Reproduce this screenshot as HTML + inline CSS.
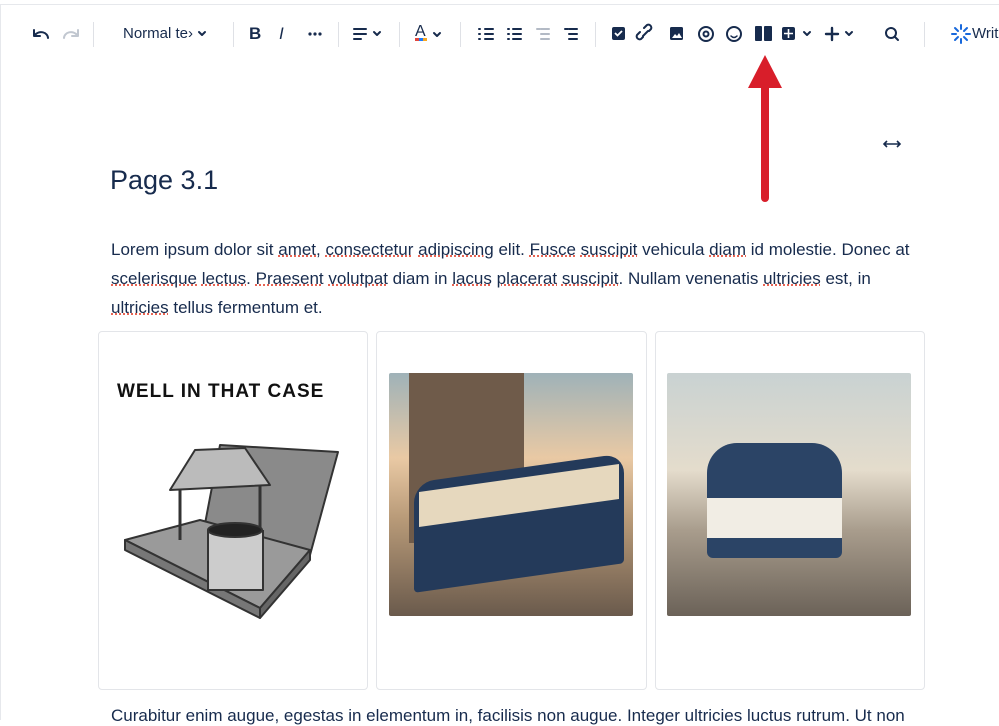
<!DOCTYPE html>
<html><head><meta charset="utf-8"><style>
*{margin:0;padding:0;box-sizing:border-box}
body{width:999px;height:720px;overflow:hidden;background:#fff;font-family:"Liberation Sans",sans-serif;color:#172B4D;position:relative}
.topline{position:absolute;left:0;top:4px;width:999px;height:1px;background:#e6e8ec}
.leftline{position:absolute;left:0;top:4px;width:1px;height:716px;background:#e6e8ec}
.sep{position:absolute;top:22px;width:1px;height:25px;background:#dfe1e6}
.t{position:absolute;white-space:nowrap;font-size:17px;color:#172B4D}
.sq{text-decoration:underline dotted #e34935}
.card{position:absolute;top:331px;height:359px;border:1px solid #e3e5e9;border-radius:4px;background:#fff}
</style></head><body>
<div class="topline"></div><div class="leftline"></div>
<svg width="999" height="60" style="position:absolute;left:0;top:0" fill="none" stroke="#172B4D" stroke-width="2" stroke-linecap="round" stroke-linejoin="round">
<path d="M35 35 a7 6 0 0 1 13 3 M34 30 v6 h6"/>
<path d="M77 35 a7 6 0 0 0 -13 3 M78 30 v6 h-6" stroke="#c1c7d0"/>
<path d="M199 32 l3 3 3-3"/>
<path d="M374 32 l3 3 3-3"/>
<path d="M434 33 l3 3 3-3"/>
<path d="M804 32 l3 3 3-3"/>
<path d="M846 32 l3 3 3-3"/>
<path d="M826 34 h12 M832 28 v12" stroke-width="2.4"/>
<circle cx="891" cy="33" r="5"/><path d="M895 37 l3 3"/>
<path d="M354 29 h12 M354 34 h12 M354 39 h7" />
<circle cx="706" cy="34" r="7"/><circle cx="706" cy="34" r="2.5"/>
<circle cx="734" cy="34" r="7"/><path d="M731 36 q3 3 6 0" stroke-width="1.5"/>
<path d="M643 37 l-2 2 a3 3 0 0 1 -4 -4 l3 -3 M649 31 l2 -2 a3 3 0 0 0 -4 -4 l-3 3 M643 36 l5 -5"/>
<path d="M485 29 h8 M485 34 h8 M485 39 h8 M479 29 h1 M479 34 h1 M479 39 h1"/>
<path d="M513 29 h8 M513 34 h8 M513 39 h8 M508 29 h1 M508 34 h1 M508 39 h1"/>
<path d="M541 29 h8 M541 34 h8 M541 39 h8 M537 29 h3" stroke="#b3bac5"/>
<path d="M569 29 h8 M569 34 h8 M569 39 h8 M565 29 h3"/>
<path d="M961 25 v4 M961 39 v4 M952 34 h4 M966 34 h4 M955 28 l3 3 M967 28 l-3 3 M955 40 l3 -3 M967 40 l-3 -3" stroke="#1868db"/>
</svg>
<svg width="999" height="60" style="position:absolute;left:0;top:0" fill="#172B4D">
<circle cx="310" cy="34" r="1.6"/><circle cx="315" cy="34" r="1.6"/><circle cx="320" cy="34" r="1.6"/>
<rect x="612" y="27" width="13" height="13" rx="2"/><path d="M615 33 l2.5 2.5 4.5-4.5" stroke="#fff" stroke-width="1.8" fill="none"/>
<rect x="670" y="27" width="13" height="13" rx="1.5"/><path d="M672 38 l3-4 2 2 2-3 3 5z" fill="#fff"/>
<rect x="755" y="26" width="7" height="15" rx="1"/><rect x="764" y="26" width="8" height="15" rx="1"/>
<rect x="782" y="27" width="13" height="13" rx="2"/><path d="M784 33.5 h9 M788.5 29 v9" stroke="#fff" stroke-width="1.6"/>
<rect x="415" y="38" width="4" height="3" fill="#e2483d"/><rect x="419" y="38" width="4" height="3" fill="#1d7afc"/><rect x="423" y="38" width="4" height="3" fill="#f5a623"/>
</svg>
<div class="sep" style="left:93px"></div><div class="sep" style="left:233px"></div><div class="sep" style="left:338px"></div><div class="sep" style="left:399px"></div><div class="sep" style="left:460px"></div><div class="sep" style="left:595px"></div><div class="sep" style="left:924px"></div>
<div class="t" style="left:123px;top:25px;font-size:15px">Normal te›</div>
<div class="t" style="left:249px;top:24px;font-size:17px;font-weight:bold">B</div>
<div class="t" style="left:279px;top:24px;font-size:17px;font-style:italic">I</div>
<div class="t" style="left:415px;top:23px;font-size:16px">A</div>
<div class="t" style="left:972px;top:25px;font-size:15px">Writ</div>
<svg width="20" height="10" style="position:absolute;left:882px;top:139px" fill="none" stroke="#172B4D" stroke-width="1.6"><path d="M2 5h16 M5 2 L2 5 5 8 M15 2 L18 5 15 8"/></svg>
<div class="t" style="left:110px;top:165px;font-size:27px">Page 3.1</div>
<div class="t" style="left:111px;top:240px">Lorem ipsum dolor sit <span class="sq">amet</span>, <span class="sq">consectetur</span> <span class="sq">adipiscing</span> elit. <span class="sq">Fusce</span> <span class="sq">suscipit</span> vehicula <span class="sq">diam</span> id molestie. Donec at</div>
<div class="t" style="left:111px;top:269px"><span class="sq">scelerisque</span> <span class="sq">lectus</span>. <span class="sq">Praesent</span> <span class="sq">volutpat</span> diam in <span class="sq">lacus</span> <span class="sq">placerat</span> <span class="sq">suscipit</span>. Nullam venenatis <span class="sq">ultricies</span> est, in</div>
<div class="t" style="left:111px;top:298px"><span class="sq">ultricies</span> tellus fermentum et.</div>
<div class="card" style="left:98px;width:270px"></div>
<div class="card" style="left:376px;width:271px"></div>
<div class="card" style="left:655px;width:270px"></div>
<div class="t" style="left:117px;top:381px;font-size:19px;font-weight:bold;letter-spacing:1px;color:#111">WELL IN THAT CASE</div>
<svg width="240" height="180" style="position:absolute;left:120px;top:440px" stroke="#333" stroke-width="2" stroke-linejoin="round">
<path d="M100 5 L218 12 L190 115 L80 110 Z" fill="#8a8a8a"/>
<path d="M5 100 L80 80 L190 110 L140 168 Z" fill="#9a9a9a"/>
<path d="M5 100 L140 168 L140 178 L5 110Z" fill="#777"/>
<path d="M140 168 L190 110 L190 120 L140 178Z" fill="#666"/>
<path d="M75 10 L125 8 L150 45 L50 50 Z" fill="#bbb"/>
<path d="M60 50 v50 M140 45 v50" stroke-width="3"/>
<path d="M88 90 v60 h55 v-60" fill="#ccc"/><ellipse cx="115" cy="90" rx="27" ry="7" fill="#222"/>
</svg>
<div style="position:absolute;left:389px;top:373px;width:244px;height:243px;background:linear-gradient(180deg,#9fb2b8 0%,#e9c9a4 35%,#b89a78 60%,#6a5a4c 100%);border-radius:2px;overflow:hidden">
<div style="position:absolute;left:20px;top:0;width:115px;height:170px;background:#6f5b4a"></div>
<div style="position:absolute;left:25px;top:95px;width:210px;height:110px;background:#243a5a;border-radius:20px 20px 4px 4px;transform:skewY(-8deg)"></div>
<div style="position:absolute;left:30px;top:105px;width:200px;height:35px;background:#e6d8be;transform:skewY(-8deg)"></div>
</div>
<div style="position:absolute;left:667px;top:373px;width:244px;height:243px;background:linear-gradient(180deg,#c9d2d2 0%,#e4dccc 40%,#a89c8c 65%,#6b6258 100%);border-radius:2px;overflow:hidden">
<div style="position:absolute;left:40px;top:70px;width:135px;height:115px;background:#2b4466;border-radius:30px 30px 6px 6px"></div>
<div style="position:absolute;left:40px;top:125px;width:135px;height:40px;background:#f1ede4"></div>
</div>
<svg width="60" height="160" style="position:absolute;left:736px;top:50px"><path d="M29 5 L46 38 L12 38 Z" fill="#d81e2a"/><path d="M29 36 V148" stroke="#d81e2a" stroke-width="8" stroke-linecap="round"/></svg>
<div class="t" style="left:111px;top:706px">Curabitur enim augue, egestas in elementum in, facilisis non augue. Integer ultricies luctus rutrum. Ut non</div>
</body></html>
